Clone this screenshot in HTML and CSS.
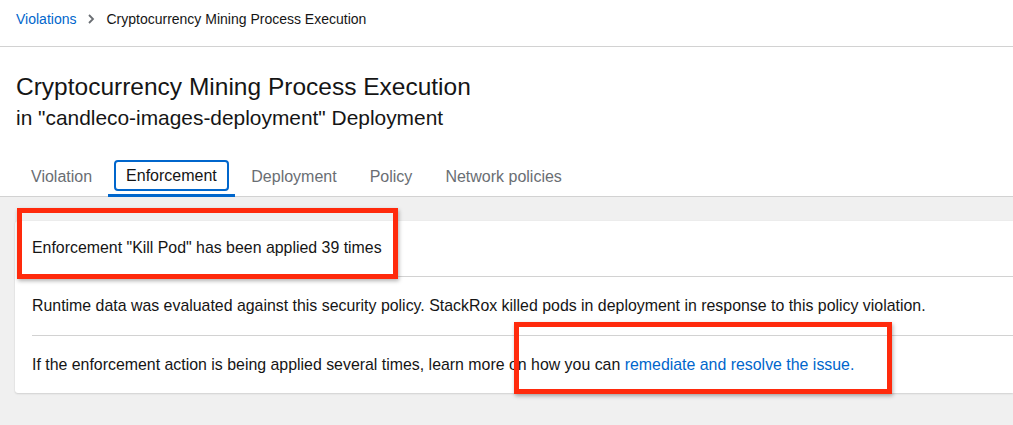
FILE: index.html
```html
<!DOCTYPE html>
<html lang="en">
<head>
<meta charset="utf-8">
<title>Cryptocurrency Mining Process Execution</title>
<link rel="stylesheet" href="styles.css">
</head>
<body>
<div class="page">
  <nav class="breadcrumb">
    <a class="crumb-link" href="#">Violations</a>
    <svg class="crumb-sep" width="8" height="10" viewBox="0 0 8 10"><path d="M2 1 L6 5 L2 9" fill="none" stroke="#6a6e73" stroke-width="1.8"/></svg>
    <span class="crumb-current">Cryptocurrency Mining Process Execution</span>
  </nav>
  <header class="header">
    <h1 class="title">Cryptocurrency Mining Process Execution</h1>
    <div class="subtitle">in "candleco-images-deployment" Deployment</div>
  </header>
  <div class="tabs">
    <button class="tab">Violation</button>
    <button class="tab tab-active"><span class="tab-focus">Enforcement</span></button>
    <button class="tab">Deployment</button>
    <button class="tab">Policy</button>
    <button class="tab">Network policies</button>
  </div>
  <main class="content">
    <section class="card">
      <div class="row row-first">Enforcement "Kill Pod" has been applied 39 times</div>
      <div class="row">Runtime data was evaluated against this security policy. StackRox killed pods in deployment in response to this policy violation.</div>
      <div class="row row-last">If the enforcement action is being applied several times, learn more on how you can <a class="link" href="#">remediate and resolve the issue.</a></div>
    </section>
    <div class="annot annot-1"></div>
    <div class="annot annot-2"></div>
  </main>
</div>
</body>
</html>
```
FILE: styles.css
```css
* { box-sizing: border-box; }
html, body { margin: 0; padding: 0; }
body {
  font-family: "Liberation Sans", Arial, sans-serif;
  color: #151515;
  background: #f0f0f0;
  width: 1013px;
  height: 425px;
  overflow: hidden;
}
.page { display: flex; flex-direction: column; height: 425px; }
.breadcrumb {
  background: #fff;
  display: flex;
  align-items: center;
  height: 47px;
  padding: 0 16px 8px;
  font-size: 14px;
  border-bottom: 1px solid #d2d2d2;
}
.crumb-link { color: #0066cc; text-decoration: none; }
.crumb-sep { margin: 0 11px 0 11px; }
.crumb-current { color: #151515; }
.header {
  background: #fff;
  padding: 25px 16px 0;
}
.title {
  margin: 0;
  font-size: 24.5px;
  font-weight: 400;
  line-height: 30px;
}
.subtitle {
  font-size: 20.9px;
  line-height: 28px;
  margin-top: 2px;
}
.tabs {
  background: #fff;
  display: flex;
  padding: 28px 0 0 15px;
  border-bottom: 1px solid #d2d2d2;
}
.tab {
  font-family: inherit;
  font-size: 16px;
  color: #6a6e73;
  background: none;
  border: 0;
  padding: 6px 16px 9px;
  height: 36px;
  line-height: 20px;
  position: relative;
}
.tab:nth-child(n+3) { padding: 6px 16.5px 9px 16.5px; }
.tab-active { color: #151515; padding: 0 6px 5px; }
.tab-active::after {
  content: "";
  position: absolute;
  left: 0; right: 0; bottom: -1px;
  height: 3px;
  background: #0066cc;
}
.tab-focus {
  display: block;
  border: 2px solid #0066cc;
  border-radius: 4px;
  padding: 4px 10px 3px;
  line-height: 20px;
}
.content {
  flex: 1;
  position: relative;
  padding: 24px 0 0 15px;
}
.card {
  background: #fff;
  box-shadow: 0 1px 2px rgba(3,3,3,0.12), 0 0 2px rgba(3,3,3,0.06);
  border-radius: 3px 0 0 3px;
  padding: 0 0 0 17px;
  font-size: 15.9px;
}
.row {
  padding: 19px 0 19px;
  line-height: 20px;
  border-bottom: 1px solid #d2d2d2;
}
.row-first { padding-top: 17px; padding-bottom: 18px; }
.row-last { border-bottom: 0; padding-bottom: 18px; }
.link { color: #0066cc; text-decoration: none; }
.annot {
  position: absolute;
  border: 5px solid #ff2a0c;
  box-shadow: 1px 2px 4px rgba(0,0,0,0.3);
}
.annot-1 { left: 17px; top: 11px; width: 381px; height: 71px; }
.annot-2 { left: 514px; top: 125px; width: 378px; height: 72px; }
```
